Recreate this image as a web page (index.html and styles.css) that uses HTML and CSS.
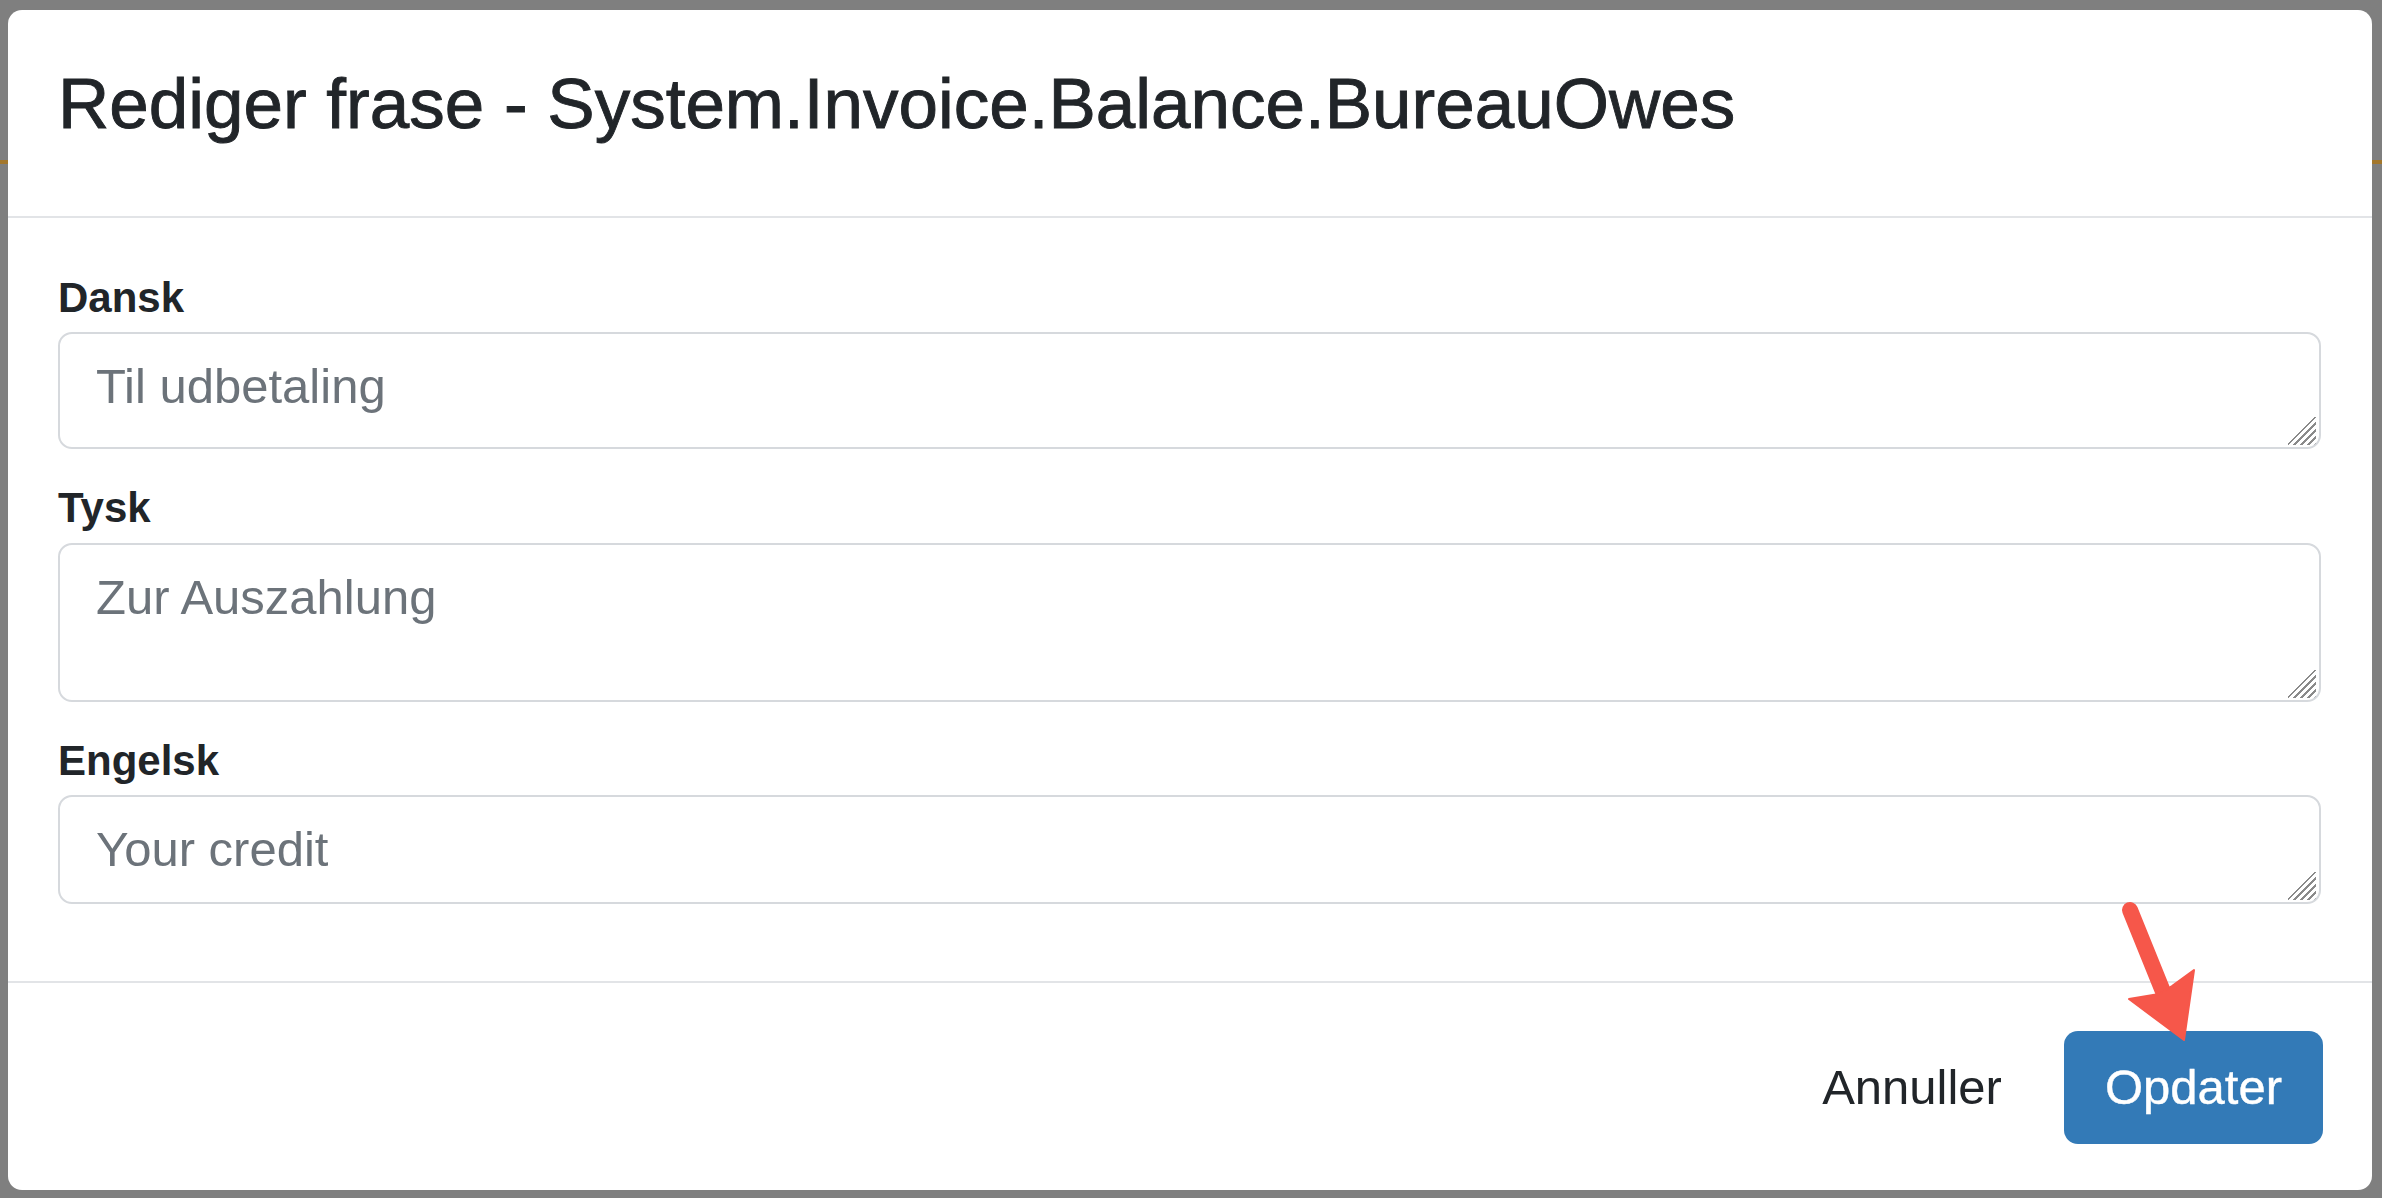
FILE: index.html
```html
<!DOCTYPE html>
<html lang="da">
<head>
<meta charset="utf-8">
<title>Rediger frase</title>
<link rel="stylesheet" href="styles.css">
</head>
<body>
<div class="modal">
  <div class="modal-header">
    <h4 class="modal-title">Rediger frase - System.Invoice.Balance.BureauOwes</h4>
  </div>
  <div class="modal-body">
    <div class="group">
      <label class="label">Dansk</label>
      <textarea class="field field-da">Til udbetaling</textarea>
    </div>
    <div class="group">
      <label class="label">Tysk</label>
      <textarea class="field field-de">Zur Auszahlung</textarea>
    </div>
    <div class="group">
      <label class="label">Engelsk</label>
      <textarea class="field field-en">Your credit</textarea>
    </div>
  </div>
  <div class="modal-footer">
    <button class="btn btn-link" type="button">Annuller</button>
    <button class="btn btn-primary" type="button">Opdater</button>
  </div>
  <svg class="arrow" width="120" height="170" viewBox="0 0 120 170">
    <line x1="30" y1="20" x2="64" y2="104" stroke="#f6574a" stroke-width="16" stroke-linecap="round"/>
    <polygon points="84,150 29,109 59,104 72,96 94,80" fill="#f6574a" stroke="#f6574a" stroke-width="2" stroke-linejoin="round"/>
  </svg>
</div>
</body>
</html>
```

FILE: styles.css
```css
* {
  box-sizing: border-box;
}

html, body {
  margin: 0;
  padding: 0;
}

body {
  width: 2382px;
  height: 1198px;
  overflow: hidden;
  background:
    linear-gradient(to bottom, transparent 0 160px, #a3772c 160px 164px, transparent 164px),
    #7f7f7f;
  font-family: "Liberation Sans", Helvetica, Arial, sans-serif;
  color: #212529;
}

.modal {
  position: relative;
  margin: 10px 0 0 8px;
  width: 2364px;
  height: 1180px;
  background: #ffffff;
  border-radius: 14px;
  display: flex;
  flex-direction: column;
}

.modal-header {
  height: 208px;
  padding: 51px 50px 0;
  border-bottom: 2px solid #e2e4e7;
  flex: none;
}

.modal-title {
  margin: 0;
  font-size: 71px;
  line-height: 1.2;
  font-weight: 400;
  color: #212529;
  white-space: nowrap;
  -webkit-text-stroke: 0.9px #212529;
}

.modal-body {
  flex: 1;
  padding: 55px 51px 0 50px;
  display: flex;
  flex-direction: column;
  gap: 34px;
}

.group {
  display: flex;
  flex-direction: column;
}

.label {
  font-size: 42px;
  line-height: 1.2;
  font-weight: 700;
  margin-bottom: 9px;
  color: #212529;
}

.field {
  display: block;
  width: 100%;
  margin: 0;
  font-family: "Liberation Sans", Helvetica, Arial, sans-serif;
  font-size: 49px;
  line-height: 1.5;
  color: #6c737a;
  padding: 16px 36px;
  border: 2px solid #d6d9dd;
  border-radius: 14px;
  resize: none;
  outline: none;
  overflow: hidden;
  background-color: #ffffff;
  background-image:
    linear-gradient(to bottom right, #ffffff 0 48%, transparent 48%),
    repeating-linear-gradient(135deg, transparent 0 3px, #8a8a8a 3px 5px);
  background-size: 28px 28px, 28px 28px;
  background-position: right 3px bottom 2px, right 3px bottom 2px;
  background-repeat: no-repeat;
}

.field-da {
  height: 117px;
}

.field-de {
  height: 159px;
}

.field-en {
  height: 109px;
}

.modal-footer {
  flex: none;
  height: 209px;
  border-top: 2px solid #e2e4e7;
  display: flex;
  justify-content: flex-end;
  align-items: center;
  gap: 21px;
  padding: 2px 49px 0 0;
}

.btn {
  font-family: "Liberation Sans", Helvetica, Arial, sans-serif;
  font-size: 49px;
  line-height: 1.5;
  padding: 20px 41px;
  height: 113px;
  border-radius: 14px;
  border: none;
  cursor: pointer;
}

.btn-link {
  background: transparent;
  color: #212529;
}

.btn-primary {
  background: #337ab7;
  color: #ffffff;
  -webkit-text-stroke: 0.4px #ffffff;
}

.arrow {
  position: absolute;
  left: 2092px;
  top: 880px;
  overflow: visible;
}
```
